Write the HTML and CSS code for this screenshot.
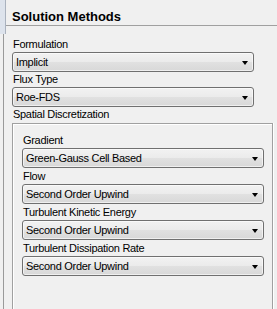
FILE: index.html
```html
<!DOCTYPE html>
<html>
<head>
<meta charset="utf-8">
<link rel="stylesheet" href="styles.css">
</head>
<body>
<div class="top">
  <div class="rail"></div>
  <div class="head"><div class="title">Solution Methods</div></div>
</div>
<div class="panel">
  <div class="label">Formulation</div>
  <div class="combo"><span>Implicit</span><i class="arrow"></i></div>
  <div class="label">Flux Type</div>
  <div class="combo"><span>Roe-FDS</span><i class="arrow"></i></div>
  <div class="label">Spatial Discretization</div>
  <div class="group">
    <div class="label">Gradient</div>
    <div class="combo"><span>Green-Gauss Cell Based</span><i class="arrow"></i></div>
    <div class="label">Flow</div>
    <div class="combo"><span>Second Order Upwind</span><i class="arrow"></i></div>
    <div class="label">Turbulent Kinetic Energy</div>
    <div class="combo"><span>Second Order Upwind</span><i class="arrow"></i></div>
    <div class="label">Turbulent Dissipation Rate</div>
    <div class="combo"><span>Second Order Upwind</span><i class="arrow"></i></div>
  </div>
</div>
</body>
</html>
```
FILE: styles.css
```css
html, body {
  margin: 0;
  padding: 0;
  background: #f0f0f0;
  height: 309px;
  overflow: hidden;
  font-family: "Liberation Sans", Arial, sans-serif;
  font-size: 11px;
  letter-spacing: -0.3px;
  color: #000;
}
.top {
  display: flex;
  height: 34px;
}
.rail {
  width: 5px;
  height: 34px;
  background: #dde3ec;
  border-right: 1px solid #aab2be;
}
.head {
  flex: 1;
}
.title {
  height: 26px;
  border-bottom: 1px solid #a0a0a0;
  box-sizing: border-box;
  padding-left: 6px;
  font-weight: bold;
  font-size: 13px;
  letter-spacing: 0;
  line-height: 34px;
  color: #000;
}
.panel {
  margin-left: 3px;
  border-left: 1px solid #9a9a9a;
  padding: 3px 4px 0 8px;
  height: 275px;
}
.label {
  height: 15px;
  line-height: 15px;
  padding-left: 1px;
}
.group .label {
  height: 16px;
  line-height: 17px;
}
.combo {
  width: 242px;
  height: 20px;
  box-sizing: border-box;
  border: 1px solid #707070;
  border-radius: 3px;
  background: linear-gradient(#f2f2f2 0%, #ebebeb 50%, #e1e1e1 50%, #d8d8d8 100%);
  box-shadow: inset 0 0 0 1px rgba(255,255,255,0.6);
  display: flex;
  align-items: center;
  justify-content: space-between;
  padding: 0 5px 0 3px;
}
.combo span {
  line-height: 16px;
}
.arrow {
  width: 0;
  height: 0;
  border-left: 3.5px solid transparent;
  border-right: 3.5px solid transparent;
  border-top: 4px solid #000;
  margin-top: 2px;
}
.group {
  margin-top: 1px;
  width: 261px;
  box-sizing: border-box;
  border: 1px solid #a0a0a0;
  border-bottom: none;
  box-shadow: inset 1px 1px 0 #fff, 1px 0 0 #fff;
  padding: 8px 0 0 9px;
  height: 200px;
}
```
